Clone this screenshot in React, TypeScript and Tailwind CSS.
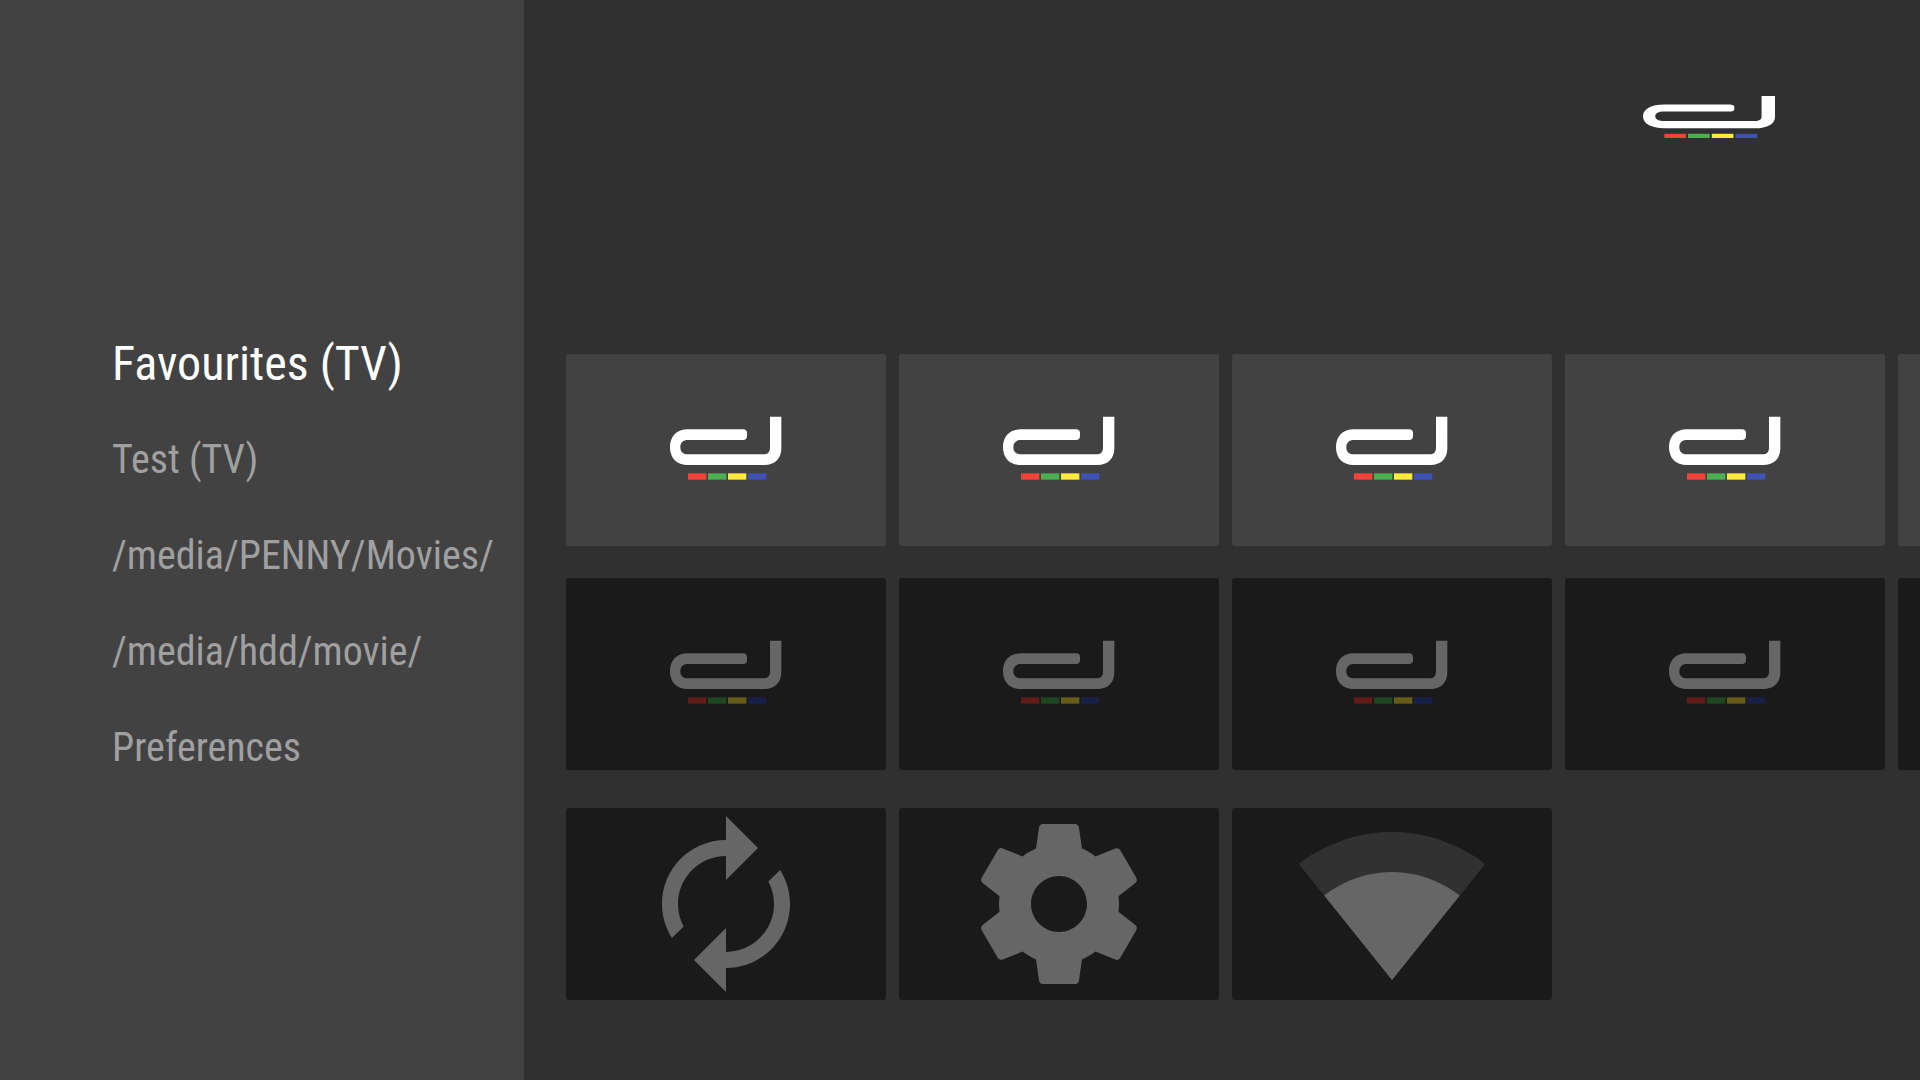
import type { ReactNode } from "react";

const menu = ["Favourites (TV)", "Test (TV)", "/media/PENNY/Movies/", "/media/hdd/movie/", "Preferences"];

function LogoShapes() {
  return (
    <>
      <path
        fill="#fff"
        d="M360 34H394V128C394 160 375 179 343 179H114C80 179 60 158 60 125.500C60 93 80 72 114 72H279Q291 72 291 84V92Q291 104 279 104H114C99 104 91 112 91 125.500C91 139 99 147 114 147H340C353 147 360 140 360 127Z"
      />
      <path fill="#f44336" d="M114 204h55v19h-55z" />
      <path fill="#4caf50" d="M174 204h55v19h-55z" />
      <path fill="#ffeb3b" d="M234 204h55v19h-55z" />
      <path fill="#3f51b5" d="M294 204h55v19h-55z" />
    </>
  );
}

function CardLogo() {
  return (
    <svg viewBox="-252 -154 960 576" className="h-full w-full" aria-hidden="true">
      <LogoShapes />
    </svg>
  );
}

function Glyph({ children }: { children: ReactNode }) {
  return (
    <svg viewBox="0 0 24 24" fill="#fff" className="h-48 w-48" aria-hidden="true">
      {children}
    </svg>
  );
}

function Card({ label, dim = false, children }: { label: string; dim?: boolean; children: ReactNode }) {
  return (
    <li className="shrink-0">
      <button
        type="button"
        aria-label={label}
        className={
          "flex h-48 w-80 items-center justify-center rounded-[3px] bg-[#424242] " + (dim ? "brightness-40" : "")
        }
      >
        {children}
      </button>
    </li>
  );
}

export default function App() {
  const slots = [1, 2, 3, 4, 5];
  return (
    <div className="flex min-h-screen bg-[#303030] font-['Roboto_Condensed','Liberation_Sans_Narrow',Roboto,sans-serif]">
      <nav className="w-[524px] shrink-0 bg-[#424242] pt-[316px]">
        <ul>
          {menu.map((item, i) => (
            <li key={item}>
              <a
                href="#"
                aria-current={i === 0 ? "page" : undefined}
                className={
                  "flex h-24 items-center pl-28 whitespace-nowrap " +
                  (i === 0 ? "text-[48px] text-white" : "text-[40px] text-[#a0a0a0]")
                }
              >
                {item}
              </a>
            </li>
          ))}
        </ul>
      </nav>
      <main className="min-w-0 flex-1 overflow-hidden pt-24 pb-20 pl-[42px]">
        <header className="mb-[216px] flex justify-end pr-[145px]">
          <svg viewBox="60 34 334 189" preserveAspectRatio="none" className="h-[42px] w-[132px]" role="img" aria-label="Logo">
            <LogoShapes />
          </svg>
        </header>
        <ul className="flex gap-[13px]">
          {slots.map((n) => (
            <Card key={n} label={"Channel " + n}>
              <CardLogo />
            </Card>
          ))}
        </ul>
        <ul className="mt-8 flex gap-[13px]">
          {slots.map((n) => (
            <Card key={n} dim label={"Upcoming " + n}>
              <CardLogo />
            </Card>
          ))}
        </ul>
        <ul className="mt-[38px] flex gap-[13px]">
          <Card dim label="Refresh">
            <Glyph>
              <path d="M12 6v3l4-4-4-4v3c-4.420 0-8 3.580-8 8 0 1.570.46 3.030 1.240 4.260L6.700 14.800c-.45-.83-.7-1.790-.7-2.800 0-3.310 2.690-6 6-6zm6.760 1.740L17.300 9.200c.44.84.7 1.790.7 2.800 0 3.310-2.690 6-6 6v-3l-4 4 4 4v-3c4.420 0 8-3.580 8-8 0-1.570-.46-3.030-1.240-4.260z" />
            </Glyph>
          </Card>
          <Card dim label="Settings">
            <Glyph>
              <path d="M19.430 12.980c.04-.32.07-.64.07-.98s-.03-.66-.07-.98l2.110-1.650c.19-.15.24-.42.12-.64l-2-3.460c-.12-.22-.39-.3-.61-.22l-2.490 1c-.52-.4-1.080-.73-1.690-.98l-.38-2.650C14.460 2.180 14.250 2 14 2h-4c-.25 0-.46.18-.49.42l-.38 2.650c-.61.25-1.170.59-1.690.98l-2.490-1c-.23-.09-.49 0-.61.22l-2 3.460c-.13.22-.07.49.12.64l2.110 1.650c-.04.32-.07.65-.07.98s.03.66.07.98l-2.110 1.650c-.19.15-.24.42-.12.64l2 3.460c.12.22.39.3.61.22l2.490-1c.52.4 1.080.73 1.690.98l.38 2.650c.03.24.24.42.49.42h4c.25 0 .46-.18.49-.42l.38-2.650c.61-.25 1.170-.59 1.690-.98l2.490 1c.23.09.49 0 .61-.22l2-3.460c.12-.22.07-.49-.12-.64l-2.110-1.650zM12 15.500c-1.930 0-3.500-1.570-3.500-3.500s1.570-3.500 3.500-3.500 3.500 1.570 3.500 3.500-1.570 3.500-3.500 3.500z" />
            </Glyph>
          </Card>
          <Card dim label="Signal">
            <Glyph>
              <path fillOpacity=".3" d="M12 21.500L23.640 7c-.45-.34-4.930-4-11.640-4C5.280 3 .81 6.660.36 7z" />
              <path d="M3.530 10.950L12 21.500l8.470-10.550C20.040 10.620 16.810 8 12 8s-8.040 2.620-8.470 2.950z" />
            </Glyph>
          </Card>
        </ul>
      </main>
    </div>
  );
}
